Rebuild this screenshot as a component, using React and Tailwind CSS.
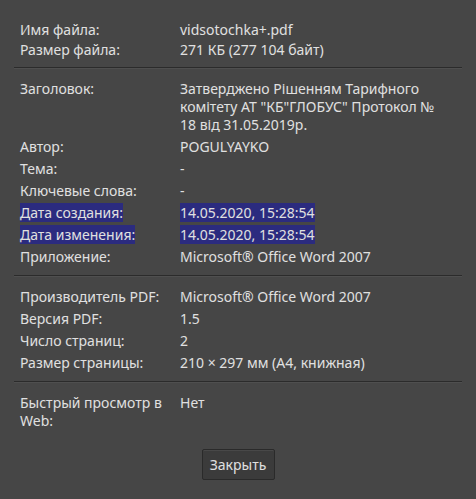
const sections = [
  [
    ["Имя файла:", "vidsotochka+.pdf"],
    ["Размер файла:", "271 КБ (277 104 байт)"],
  ],
  [
    [
      "Заголовок:",
      'Затверджено Рішенням Тарифного комітету АТ "КБ"ГЛОБУС" Протокол № 18 від 31.05.2019р.',
    ],
    ["Автор:", "POGULYAYKO"],
    ["Тема:", "-"],
    ["Ключевые слова:", "-"],
    ["Дата создания:", "14.05.2020, 15:28:54", true],
    ["Дата изменения:", "14.05.2020, 15:28:54", true],
    ["Приложение:", "Microsoft® Office Word 2007"],
  ],
  [
    ["Производитель PDF:", "Microsoft® Office Word 2007"],
    ["Версия PDF:", "1.5"],
    ["Число страниц:", "2"],
    ["Размер страницы:", "210 × 297 мм (A4, книжная)"],
  ],
  [["Быстрый просмотр в Web:", "Нет"]],
];

function Sel({ on, children }) {
  return on ? <span className="bg-[#2b2b7f]">{children}</span> : children;
}

export default function App() {
  return (
    <div
      className="w-[476px] h-[499px] bg-[#464646] text-[#e0e0e0] text-[14px] leading-[18px] pt-[20px]"
      style={{ fontFamily: '"Noto Sans", "Open Sans", sans-serif' }}
    >
      {sections.map((rows, si) => (
        <div key={si}>
          {si > 0 && (
            <div className="mx-[14px] mt-[7px] mb-[9px] h-[2px] bg-[#2b2b2b] border-b border-[#4f4f4f]" />
          )}
          <div className="flex flex-col px-5">
            {rows.map(([label, value, sel]) => (
              <div
                key={label}
                className={
                  si === 0
                    ? "grid grid-cols-[160px_258px] py-px"
                    : "grid grid-cols-[160px_258px] py-[2px]"
                }
              >
                <div className="pr-2">
                  <Sel on={sel}>{label}</Sel>
                </div>
                <div>
                  <Sel on={sel}>{value}</Sel>
                </div>
              </div>
            ))}
          </div>
        </div>
      ))}
      <div className="flex justify-center mt-[17px]">
        <button className="w-[73px] h-[31px] bg-[#3b3b3b] border border-[#2a2a2a] rounded-[2px] text-[#e0e0e0] shadow-[inset_0_1px_0_#484848]">
          Закрыть
        </button>
      </div>
    </div>
  );
}
